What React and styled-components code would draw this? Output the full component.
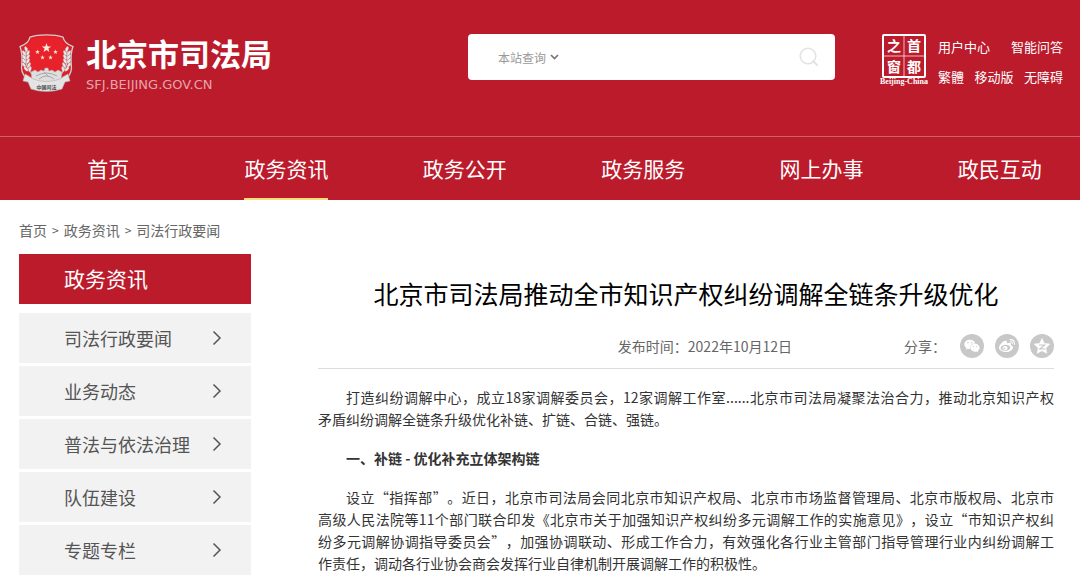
import React, { useState } from 'react'
import styled, { createGlobalStyle } from 'styled-components'
import { FaWeixin, FaWeibo } from 'react-icons/fa'

const navItems = ['首页', '政务资讯', '政务公开', '政务服务', '网上办事', '政民互动']

const sideItems = ['司法行政要闻', '业务动态', '普法与依法治理', '队伍建设', '专题专栏']

const intro = [
    '打造纠纷调解中心，成立18家调解委员会，12家调解工作室......北京市司法局凝聚法治合力，推动北京知识产权',
    '矛盾纠纷调解全链条升级优化补链、扩链、合链、强链。',
]

const detail = [
    '设立“指挥部”。近日，北京市司法局会同北京市知识产权局、北京市市场监督管理局、北京市版权局、北京市',
    '高级人民法院等11个部门联合印发《北京市关于加强知识产权纠纷多元调解工作的实施意见》，设立“市知识产权纠',
    '纷多元调解协调指导委员会”，加强协调联动、形成工作合力，有效强化各行业主管部门指导管理行业内纠纷调解工',
    '作责任，调动各行业协会商会发挥行业自律机制开展调解工作的积极性。',
]

const Star = ({ x, y, r }) => {
    const points = Array.from({ length: 10 }, (_, i) => {
        const radius = i % 2 ? r * 0.4 : r
        const angle = (Math.PI / 5) * i - Math.PI / 2
        return `${x + radius * Math.cos(angle)},${y + radius * Math.sin(angle)}`
    }).join(' ')
    return <polygon points={points} fill="#fbe9dc" />
}

const wheat = [
    [7, 15, -20], [5, 19, -35], [9, 19, 25], [5, 23, -35], [9, 23, 30],
    [5, 27, -35], [9, 27, 30], [5, 31, -40], [10, 31, 25], [7, 35, -45], [11, 35, 15],
]

const Wheat = () => (
    <g>
        <path d="M8 14 C5 22 6 32 13 40" fill="none" stroke="#c9c9c9" strokeWidth="1.4" />
        {wheat.map(([x, y, turn]) => (
            <ellipse key={`${x}-${y}`} cx={x} cy={y} rx="1.3" ry="2.7" fill="#e9e9e9" stroke="#a9a4a4" strokeWidth="0.3" transform={`rotate(${turn} ${x} ${y})`} />
        ))}
    </g>
)

const Emblem = () => (
    <svg width="55" height="58" viewBox="0 0 55 58" aria-hidden="true">
        <path d="M27.5 .8 C21 .8 15 1.8 11 3.2 C10 8 6 11 1 12.6 C4 20 3 27 2.5 34 C3 44 14 52 27.5 56 C41 52 52 44 52.5 34 C52 27 51 20 54 12.6 C49 11 45 8 44 3.2 C40 1.8 34 .8 27.5 .8Z" fill="#dd1f27" stroke="#d8cfcf" strokeWidth="1.3" />
        <path d="M27.5 3 C21 3 16 4 12.5 5 C11.5 9 8 12 4 13.8 C7 23 4 31 8 38 L27.5 44 L47 38 C51 31 48 23 51 13.8 C47 12 43.5 9 42.5 5 C39 4 34 3 27.5 3Z" fill="#e8222a" />
        <Star x={27.5} y={14} r={5} />
        <Star x={18.5} y={18} r={2.5} />
        <Star x={36.5} y={18} r={2.5} />
        <Star x={23.5} y={23.5} r={2.4} />
        <Star x={31.5} y={23.5} r={2.4} />
        <Wheat />
        <g transform="translate(55 0) scale(-1 1)"><Wheat /></g>
        <path d="M12 38 L16 36 L19 38 L22 36 L25 37 L26 34 L29 34 L30 37 L33 36 L36 38 L39 36 L43 38 L42 48 L13 48Z" fill="#dedede" stroke="#a8a8a8" strokeWidth="0.5" />
        <path d="M17 42 Q27.5 36 38 42 M20 45 Q27.5 39 35 45 M25 38 L30 43" fill="none" stroke="#9b9b9b" strokeWidth="0.8" />
        <path d="M6 40 Q10 42 14 45 Q27.5 50 41 45 Q45 42 49 40 L51 47 L46 48 L43 55 Q27.5 60 12 55 L9 48 L4 47Z" fill="#e4e4e4" stroke="#b3aeae" strokeWidth="0.6" />
        <text x="27.5" y="55" textAnchor="middle" fontSize="5" fontWeight="700" fill="#444">中国司法</text>
    </svg>
)

const Seal = () => (
    <svg width="50" height="52" viewBox="0 0 50 52" role="img" aria-label="首都之窗">
        <rect x="3" y="1" width="42" height="42" rx="1" fill="none" stroke="#fff" strokeWidth="2" />
        <path d="M24 2V42 M4 22H44" stroke="#fff" strokeOpacity="0.7" strokeWidth="1" />
        <g fill="#fff" fontSize="14" fontWeight="700" textAnchor="middle">
            <text x="14" y="17">之</text>
            <text x="34" y="17">首</text>
            <text x="14" y="38">窗</text>
            <text x="34" y="38">都</text>
        </g>
        <text x="24" y="50" textAnchor="middle" fill="#fff" fontFamily="'Liberation Serif', serif" fontSize="8" fontWeight="700">Beijing-China</text>
    </svg>
)

const QzoneIcon = () => (
    <svg width="18" height="18" viewBox="0 0 18 18" aria-hidden="true">
        <path d="M9 1.5 L11.3 6.4 L16.8 7.1 L12.8 10.9 L13.8 16.3 L9 13.7 L4.2 16.3 L5.2 10.9 L1.2 7.1 L6.7 6.4Z" fill="#fff" stroke="#fff" strokeWidth="0.6" strokeLinejoin="round" />
        <path d="M6 8 H11.5 L7 12 H12.5" fill="none" stroke="#c8c8c8" strokeWidth="1.2" />
    </svg>
)

const Lines = ({ lines }) => (
    <Paragraph>
        {lines.map((line, i) => (
            <Line key={line} $full={i < lines.length - 1}>{line}</Line>
        ))}
    </Paragraph>
)

const App = () => {
    const [scope, setScope] = useState('site')
    const [query, setQuery] = useState('')

    return (
        <>
            <GlobalStyle />
            <Header>
                <TopBar>
                    <Brand href="#">
                        <Emblem />
                        <BrandText>
                            <BrandName>北京市司法局</BrandName>
                            <BrandUrl>SFJ.BEIJING.GOV.CN</BrandUrl>
                        </BrandText>
                    </Brand>
                    <SearchForm onSubmit={(e) => e.preventDefault()}>
                        <SelectWrap>
                            <ScopeSelect aria-label="查询范围" value={scope} onChange={(e) => setScope(e.target.value)}>
                                <option value="site">本站查询</option>
                            </ScopeSelect>
                            <svg width="9" height="6" viewBox="0 0 9 6" aria-hidden="true">
                                <path d="M1 1 L4.5 4.5 L8 1" fill="none" stroke="#777" strokeWidth="1.7" />
                            </svg>
                        </SelectWrap>
                        <SearchInput aria-label="搜索" value={query} onChange={(e) => setQuery(e.target.value)} />
                        <SearchButton aria-label="搜索" type="submit">
                            <svg width="20" height="20" viewBox="0 0 20 20" aria-hidden="true">
                                <circle cx="9" cy="9" r="7.8" fill="none" stroke="#e2e2e2" strokeWidth="1.5" />
                                <path d="M13.5 13.5 L18.5 18.5" stroke="#e2e2e2" strokeWidth="2" />
                            </svg>
                        </SearchButton>
                    </SearchForm>
                    <Tools>
                        <Seal />
                        <ToolLinks>
                            <ToolRow>
                                <a href="#">用户中心</a>
                                <a href="#">智能问答</a>
                            </ToolRow>
                            <ToolRow>
                                <a href="#">繁體</a>
                                <a href="#">移动版</a>
                                <a href="#">无障碍</a>
                            </ToolRow>
                        </ToolLinks>
                    </Tools>
                </TopBar>
                <Nav>
                    {navItems.map((item) => (
                        <NavLink key={item} href="#" $active={item === '政务资讯'}>{item}</NavLink>
                    ))}
                </Nav>
            </Header>
            <Breadcrumb>
                <a href="#">首页</a>
                <Separator>&gt;</Separator>
                <a href="#">政务资讯</a>
                <Separator>&gt;</Separator>
                <a href="#">司法行政要闻</a>
            </Breadcrumb>
            <Content>
                <Sidebar>
                    <SideTitle>政务资讯</SideTitle>
                    {sideItems.map((item) => (
                        <SideLink key={item} href="#">
                            {item}
                            <svg width="10" height="16" viewBox="0 0 10 16" aria-hidden="true">
                                <path d="M1.5 1.5 L8 8 L1.5 14.5" fill="none" stroke="#555" strokeWidth="1.5" />
                            </svg>
                        </SideLink>
                    ))}
                </Sidebar>
                <Article>
                    <Title>北京市司法局推动全市知识产权纠纷调解全链条升级优化</Title>
                    <Meta>
                        <span>发布时间：2022年10月12日</span>
                        <Share>
                            <ShareLabel>分享：</ShareLabel>
                            <ShareButton aria-label="微信"><FaWeixin size={16} /></ShareButton>
                            <ShareButton aria-label="微博"><FaWeibo size={16} /></ShareButton>
                            <ShareButton aria-label="QQ空间"><QzoneIcon /></ShareButton>
                        </Share>
                    </Meta>
                    <Lines lines={intro} />
                    <SubHeading>一、补链 - 优化补充立体架构链</SubHeading>
                    <Lines lines={detail} />
                </Article>
            </Content>
        </>
    )
}

const GlobalStyle = createGlobalStyle`
    * {
        box-sizing: border-box;
    }
    body {
        margin: 0;
        background: #fff;
        color: #333;
        font-family: "Noto Sans CJK SC", sans-serif;
        font-size: 14px;
        line-height: 22px;
        text-spacing-trim: space-all;
        overflow-x: hidden;
    }
    a {
        color: inherit;
        text-decoration: none;
    }
    svg {
        display: block;
        flex-shrink: 0;
    }
`;

const Header = styled.header`
    background: #bc1b2c;
    color: #fff;
    overflow: hidden;
`;

const TopBar = styled.div`
    display: flex;
    align-items: flex-start;
    padding: 34px 17px 38px 19px;
`;

const Brand = styled.a`
    display: flex;
    flex: 1;
    gap: 12px;
`;

const BrandText = styled.div`
    display: flex;
    flex-direction: column;
`;

const BrandName = styled.span`
    font-size: 31px;
    font-weight: 700;
    line-height: 38px;
`;

const BrandUrl = styled.span`
    color: #e6a5ab;
    font-family: "DejaVu Sans", sans-serif;
    font-size: 13px;
    line-height: 26px;
`;

const SearchForm = styled.form`
    display: flex;
    align-items: center;
    flex: 0 1 367px;
    height: 46px;
    padding: 0 16px 0 30px;
    border-radius: 4px;
    background: #fff;
`;

const SelectWrap = styled.div`
    display: flex;
    align-items: center;
    gap: 4px;
    color: #999;
`;

const ScopeSelect = styled.select`
    appearance: none;
    width: 48px;
    height: 24px;
    padding: 0;
    border: 0;
    background: transparent;
    color: inherit;
    font-family: inherit;
    font-size: 12px;
`;

const SearchInput = styled.input`
    flex: 1;
    min-width: 0;
    height: 40px;
    padding: 0 10px;
    border: 0;
    outline: 0;
    font-size: 14px;
`;

const SearchButton = styled.button`
    padding: 0;
    border: 0;
    background: transparent;
    cursor: pointer;
`;

const Tools = styled.div`
    display: flex;
    width: 183px;
    margin-left: 45px;
    gap: 8px;
`;

const ToolLinks = styled.div`
    flex: 1;
    margin-top: -2px;
`;

const ToolRow = styled.div`
    display: flex;
    justify-content: space-between;
    font-size: 13px;
    line-height: 30px;
    white-space: nowrap;
`;

const Nav = styled.nav`
    display: grid;
    grid-template-columns: repeat(6, 1fr);
    justify-items: center;
    margin-right: -9px;
    padding-left: 19px;
    border-top: 1px solid #d2606b;
`;

const NavLink = styled.a`
    height: 63px;
    font-size: 21px;
    line-height: 63px;
    border-bottom: 2px solid ${({ $active }) => ($active ? '#f9dc7c' : 'transparent')};
`;

const Breadcrumb = styled.nav`
    display: flex;
    padding: 19px 19px 13px;
    color: #666;
`;

const Separator = styled.span`
    margin: 0 5px;
    font-size: 12px;
`;

const Content = styled.main`
    display: flex;
    align-items: flex-start;
    gap: 67px;
    padding: 0 26px 0 19px;
`;

const Sidebar = styled.aside`
    display: flex;
    flex-direction: column;
    flex: 0 0 232px;
    gap: 3px;
`;

const SideTitle = styled.h2`
    margin: 0 0 6px;
    padding: 0 0 2px 45px;
    background: #bc1b2c;
    color: #fff;
    font-size: 21px;
    font-weight: 400;
    line-height: 48px;
`;

const SideLink = styled.a`
    display: flex;
    align-items: center;
    justify-content: space-between;
    padding: 0 29px 0 45px;
    background: #f2f2f2;
    color: #555;
    font-size: 18px;
    line-height: 50px;
`;

const Article = styled.article`
    flex: 1;
    min-width: 0;
`;

const Title = styled.h1`
    margin: 21px 0 12px;
    color: #000;
    font-size: 25px;
    font-weight: 400;
    line-height: 36px;
    text-align: center;
`;

const Meta = styled.div`
    display: flex;
    justify-content: flex-end;
    align-items: center;
    gap: 112px;
    height: 46px;
    margin-bottom: 17px;
    border-bottom: 1px solid #ddd;
    color: #666;
`;

const Share = styled.div`
    display: flex;
    align-items: center;
    gap: 11px;
`;

const ShareLabel = styled.span`
    width: 45px;
`;

const ShareButton = styled.button`
    display: flex;
    align-items: center;
    justify-content: center;
    width: 24px;
    height: 24px;
    padding: 0;
    border: 0;
    border-radius: 50%;
    background: #c8c8c8;
    color: #fff;
    cursor: pointer;
`;

const Paragraph = styled.p`
    margin: 0 0 17px;
    text-indent: 2em;
`;

const Line = styled.span`
    display: block;
    text-align-last: ${({ $full }) => ($full ? 'justify' : 'left')};

    & + & {
        text-indent: 0;
    }
`;

const SubHeading = styled.h3`
    margin: 0 0 17px;
    font-size: 14px;
    font-weight: 700;
    text-indent: 2em;
`;

export default App
